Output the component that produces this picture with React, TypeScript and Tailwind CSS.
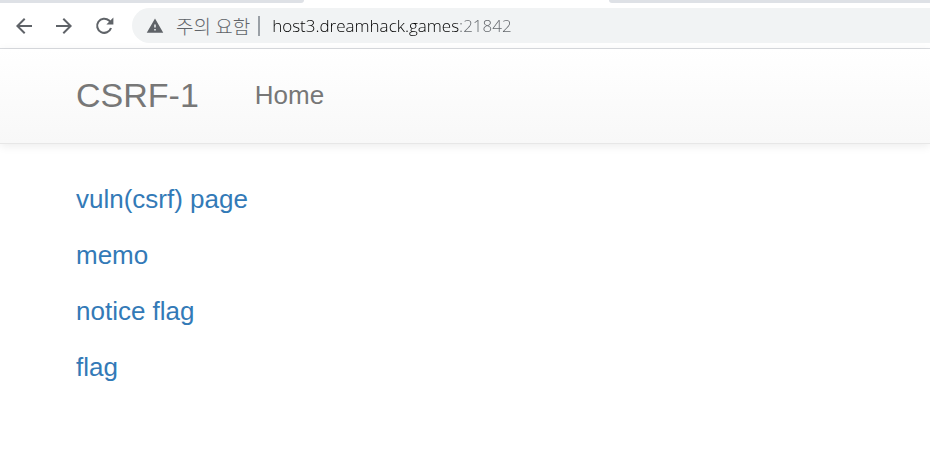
import { useState } from 'react';
import { MdArrowBack, MdArrowForward, MdWarning } from 'react-icons/md';

const pages = [
  { label: 'vuln(csrf) page', href: '#vuln' },
  { label: 'memo', href: '#memo' },
  { label: 'notice flag', href: '#notice-flag' },
  { label: 'flag', href: '#flag' },
];

const ReloadIcon = () => (
  <svg viewBox="0 0 24 24" className="size-6" aria-hidden="true">
    <path d="M19 14a7.1 7.1 0 1 1-1.9-7.4l1.8 1.8" fill="none" stroke="currentColor" strokeWidth="2.1" />
    <path d="M21.4 3.4v7h-7z" fill="currentColor" />
  </svg>
);

const TabStrip = () => (
  <div className="flex h-[3px] overflow-hidden bg-white">
    <div className="w-[304px] shrink-0 rounded-br-lg bg-[#dee1e6]" />
    <div className="w-[305px] shrink-0" />
    <div className="grow rounded-bl-lg bg-[#dee1e6]" />
  </div>
);

const Toolbar = () => {
  const [url, setUrl] = useState('host3.dreamhack.games:21842');

  return (
    <div className="flex items-center border-b border-[#dadce0] bg-white py-[5px] pl-3 text-[#5f6368]">
      <div className="flex items-center gap-4">
        <button type="button" aria-label="Back">
          <MdArrowBack className="size-6" />
        </button>
        <button type="button" aria-label="Forward">
          <MdArrowForward className="size-6" />
        </button>
        <button type="button" aria-label="Reload">
          <ReloadIcon />
        </button>
      </div>

      <div className="ml-4 flex h-[35px] grow items-center rounded-l-full bg-[#f1f3f4] pl-[14px]">
        <button type="button" className="flex items-center gap-3 font-['Noto_Sans_CJK_KR',sans-serif] text-[19px] leading-6 font-light">
          <MdWarning className="size-[18px]" />
          <span>주의 요함</span>
        </button>
        <span className="ml-2 h-5 w-[2px] bg-[#9aa0a6]" />
        {/* host is dark, port is greyed out */}
        <input
          aria-label="Address"
          value={url}
          onChange={(e) => setUrl(e.target.value)}
          className="ml-3 min-w-0 grow bg-[linear-gradient(90deg,#000000_188px,#5f6368_188px)] bg-clip-text font-['Open_Sans',sans-serif] text-[17px] leading-6 font-light text-transparent caret-black outline-none"
        />
      </div>
    </div>
  );
};

const Navbar = () => (
  <nav className="border-b border-[#e7e7e7] bg-linear-to-b from-white to-[#f8f8f8] px-[76px] text-[#777777] shadow-[0_2px_9px_rgba(0,0,0,0.08)]">
    <div className="flex items-center gap-14 pt-5 pb-[22px] leading-[52px]">
      <a href="#top" className="text-[34px]">CSRF-1</a>
      <a href="#home" className="text-[26px]">Home</a>
    </div>
  </nav>
);

const App = () => {
  return (
    <div className="min-h-screen bg-white font-['Liberation_Sans',Arial,sans-serif]">
      <header>
        <TabStrip />
        <Toolbar />
      </header>
      <Navbar />
      <main className="flex flex-col items-start gap-5 px-[76px] pt-[37px] text-[26px] leading-9 text-[#337ab7]">
        {pages.map((page) => (
          <a key={page.href} href={page.href}>
            {page.label}
          </a>
        ))}
      </main>
    </div>
  );
};

export default App;
